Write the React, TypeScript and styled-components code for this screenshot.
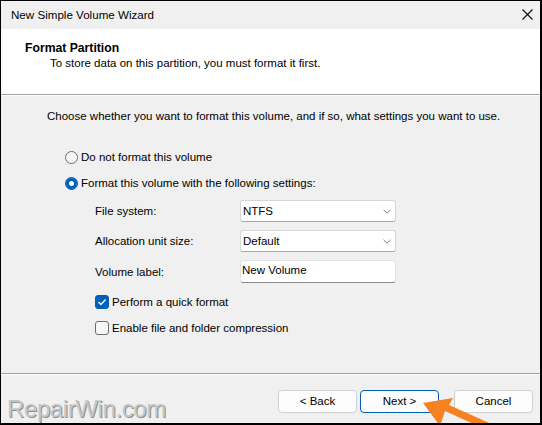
import React from "react";
import styled, { createGlobalStyle } from "styled-components";

const Global = createGlobalStyle`
  html, body { margin: 0; padding: 0; background: #ffffff; }
  body { font-family: "Liberation Sans", Arial, sans-serif; }
  * { box-sizing: border-box; }
`;

const Window = styled.div`
  position: relative;
  width: 542px;
  height: 425px;
  border-top: 1px solid #000;
  border-left: 1px solid #000;
  border-right: 2px solid #000;
  border-bottom: 2px solid #000;
  display: flex;
  flex-direction: column;
  background: #f0f0f0;
  overflow: hidden;
  font-size: 11.5px;
  color: #000;
`;

const TitleBar = styled.div`
  height: 28px;
  display: flex;
  align-items: center;
  justify-content: space-between;
  padding: 0 7px 1px 10px;
  background: #f0f0f0;
  font-size: 11.6px;
`;

const Header = styled.div`
  height: 66px;
  background: #ffffff;
  padding: 11px 0 0 24px;
  border-bottom: 1px solid #a0a0a0;
  box-shadow: 0 1px 0 #ffffff;
`;

const HeaderTitle = styled.div`
  font-weight: 700;
  font-size: 12.2px;
  line-height: 16px;
`;

const HeaderSub = styled.div`
  padding-left: 25px;
  line-height: 15px;
`;

const Body = styled.div`
  flex: 1;
  padding: 14px 0 0 46px;
  border-bottom: 1px solid #a0a0a0;
  box-shadow: 0 1px 0 #ffffff;
`;

const Intro = styled.div`
  line-height: 15px;
  white-space: nowrap;
`;

const Options = styled.div`
  margin-top: 25px;
  padding-left: 18px;
  display: flex;
  flex-direction: column;
  gap: 10px;
`;

const RadioRow = styled.div`
  display: flex;
  align-items: center;
  gap: 3px;
  height: 16px;
`;

const Radio = styled.span<{ $on?: boolean }>`
  width: 13px;
  height: 13px;
  border-radius: 50%;
  display: inline-block;
  ${(p) =>
    p.$on
      ? `background: #005fb8; border: 1px solid #005fb8; box-shadow: inset 0 0 0 3px #005fb8, inset 0 0 0 7px #ffffff;`
      : `background: #f7f7f7; border: 1px solid #6d6d6d;`}
`;

const Settings = styled.div`
  margin-top: 9px;
  padding-left: 48px;
  display: grid;
  grid-template-columns: 145px 156px;
  row-gap: 8px;
  align-items: center;
`;

const FieldLabel = styled.div``;

const Select = styled.div`
  height: 22px;
  background: #fff;
  border: 1px solid #d6d6d6;
  border-bottom-color: #a8a8a8;
  border-radius: 3px;
  display: flex;
  align-items: center;
  justify-content: space-between;
  padding: 0 4px 0 2px;
`;

const TextBox = styled.div`
  height: 23px;
  background: #fff;
  border: 1px solid #e2e2e2;
  border-bottom: 1px solid #8a8a8a;
  border-radius: 3px;
  display: flex;
  align-items: center;
  padding: 0 4px 3px 1px;
`;

const Checks = styled.div`
  margin-top: 12px;
  padding-left: 48px;
  display: flex;
  flex-direction: column;
  gap: 12px;
`;

const CheckRow = styled.div`
  display: flex;
  align-items: center;
  gap: 3px;
  height: 14px;
`;

const Box = styled.span<{ $on?: boolean }>`
  width: 14px;
  height: 14px;
  border-radius: 3px;
  display: inline-flex;
  align-items: center;
  justify-content: center;
  ${(p) =>
    p.$on
      ? `background: #005fb8; border: 1px solid #005fb8;`
      : `background: #f7f7f7; border: 1px solid #6d6d6d;`}
`;

const Footer = styled.div`
  height: 49px;
  display: flex;
  align-items: center;
  justify-content: space-between;
  padding: 0 7px 0 6px;
`;

const Watermark = styled.div`
  font-family: "Liberation Sans", Arial, sans-serif;
  font-size: 24px;
  letter-spacing: -0.4px;
  color: #c6c6c6;
  text-shadow: 1px 1px 0 #8e8e8e;
  margin-top: 20px;
`;

const Buttons = styled.div`
  display: flex;
  margin-top: 6px;
`;

const Button = styled.div<{ $focus?: boolean; $gap?: number }>`
  width: 79px;
  height: 23px;
  margin-left: ${(p) => p.$gap ?? 0}px;
  background: #fdfdfd;
  border: 1px solid ${(p) => (p.$focus ? "#005fb8" : "#d0d0d0")};
  border-radius: 4px;
  display: flex;
  align-items: center;
  justify-content: center;
  padding-bottom: 1px;
`;

const Arrow = styled.svg`
  position: absolute;
  left: 415px;
  top: 392px;
`;

const Chevron = () => (
  <svg width="8" height="5" viewBox="0 0 8 5">
    <path d="M0.5 0.8 L4 4.2 L7.5 0.8" fill="none" stroke="#7a7a7a" strokeWidth="1" />
  </svg>
);

const Close = () => (
  <svg width="11" height="11" viewBox="0 0 11 11">
    <path d="M0.5 0.5 L10.5 10.5 M10.5 0.5 L0.5 10.5" stroke="#111" strokeWidth="1.2" />
  </svg>
);

export default function App() {
  return (
    <>
      <Global />
      <Window>
        <TitleBar>
          <span>New Simple Volume Wizard</span>
          <Close />
        </TitleBar>
        <Header>
          <HeaderTitle>Format Partition</HeaderTitle>
          <HeaderSub>To store data on this partition, you must format it first.</HeaderSub>
        </Header>
        <Body>
          <Intro>
            Choose whether you want to format this volume, and if so, what settings you want to use.
          </Intro>
          <Options>
            <RadioRow>
              <Radio />
              <span>Do not format this volume</span>
            </RadioRow>
            <RadioRow>
              <Radio $on />
              <span>Format this volume with the following settings:</span>
            </RadioRow>
          </Options>
          <Settings>
            <FieldLabel>File system:</FieldLabel>
            <Select>
              <span>NTFS</span>
              <Chevron />
            </Select>
            <FieldLabel>Allocation unit size:</FieldLabel>
            <Select>
              <span>Default</span>
              <Chevron />
            </Select>
            <FieldLabel>Volume label:</FieldLabel>
            <TextBox>New Volume</TextBox>
          </Settings>
          <Checks>
            <CheckRow>
              <Box $on>
                <svg width="10" height="8" viewBox="0 0 10 8">
                  <path d="M1.5 4 L4 6.5 L8.5 1.5" fill="none" stroke="#fff" strokeWidth="1.3" />
                </svg>
              </Box>
              <span>Perform a quick format</span>
            </CheckRow>
            <CheckRow>
              <Box />
              <span>Enable file and folder compression</span>
            </CheckRow>
          </Checks>
        </Body>
        <Footer>
          <Watermark>RepairWin.com</Watermark>
          <Buttons>
            <Button>&lt; Back</Button>
            <Button $focus $gap={3}>Next &gt;</Button>
            <Button $gap={15}>Cancel</Button>
          </Buttons>
        </Footer>
        <Arrow width="90" height="33" viewBox="0 0 90 33">
          <path d="M7 10 L37 5 L33 12 L80 33 L62 33 L29 18 L24 33 Z" fill="#f58220" />
        </Arrow>
      </Window>
    </>
  );
}
